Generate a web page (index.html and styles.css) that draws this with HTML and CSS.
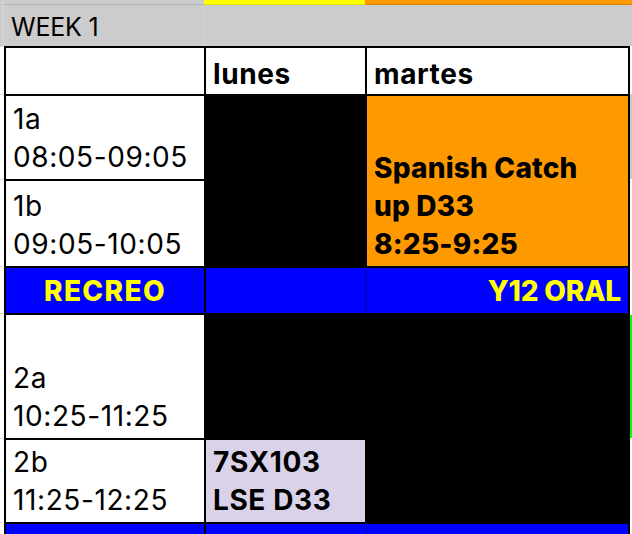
FILE: index.html
```html
<!DOCTYPE html>
<html lang="es">
<head>
<meta charset="utf-8">
<title>Week 1</title>
<link rel="stylesheet" href="styles.css">
</head>
<body>
<div class="sheet">
  <!-- strip row -->
  <div class="m m-gray"></div>
  <div class="strip gray"></div>
  <div class="strip yellow"></div>
  <div class="strip orange"></div>
  <div class="strip orange"></div>

  <!-- week row -->
  <div class="m m-gray"></div>
  <div class="cell week gray">WEEK 1</div>
  <div class="gray week-fill"></div>

  <!-- header row -->
  <div class="m m-line"></div>
  <div class="cell bt bl"></div>
  <div class="cell head bt bl">lunes</div>
  <div class="cell head bt bl br">martes</div>
  <div class="edge"></div>

  <!-- 1a -->
  <div class="m m-line"></div>
  <div class="cell bt bl">1a<br>08:05-09:05</div>
  <div class="cell black bt bl span2"></div>
  <div class="cell orange xb bt bl br span2">Spanish Catch<br>up D33<br>8:25-9:25</div>
  <div class="edge edge-gray"></div>

  <!-- 1b -->
  <div class="m m-line"></div>
  <div class="cell bt bl">1b<br>09:05-10:05</div>
  <div class="edge edge-cream"></div>

  <!-- recreo -->
  <div class="m m-line"></div>
  <div class="cell blue hl recreo center bt bl">RECREO</div>
  <div class="cell blue bt bl"></div>
  <div class="cell blue hl oral right bt bl-soft br">Y12 ORAL</div>
  <div class="edge"></div>

  <!-- 2a -->
  <div class="m m-line"></div>
  <div class="cell bt bl">2a<br>10:25-11:25</div>
  <div class="cell black bt bl"></div>
  <div class="cell black bt bl br span2"></div>
  <div class="edge edge-green"></div>

  <!-- 2b -->
  <div class="m m-line"></div>
  <div class="cell bt bl">2b<br>11:25-12:25</div>
  <div class="cell lavender b bt bl">7SX103<br>LSE D33</div>
  <div class="edge"></div>

  <!-- next row -->
  <div class="m m-line"></div>
  <div class="cell blue bt bl"></div>
  <div class="cell blue bt bl"></div>
  <div class="cell blue bt bl-soft br"></div>
  <div class="edge"></div>
</div>
</body>
</html>
```

FILE: styles.css
```css
* {
  box-sizing: border-box;
  margin: 0;
  padding: 0;
}

html,
body {
  width: 632px;
  height: 534px;
  overflow: hidden;
  background: #ffffff;
}

body {
  font-family: Inter, "Liberation Sans", sans-serif;
  color: #000000;
}

.sheet {
  display: grid;
  grid-template-columns: 4px 200px 161px 265px 2px;
  grid-template-rows: 5px 41px 48px 85px 87px 47px 125px 84px 12px;
}

.cell {
  display: flex;
  flex-direction: column;
  justify-content: flex-end;
  padding: 0 7px 3px 7px;
  font-size: 28px;
  line-height: 38px;
  letter-spacing: 0.6px;
  white-space: nowrap;
  overflow: hidden;
}

.bt { border-top: 2px solid #000000; }
.bl { border-left: 2px solid #000000; }
.br { border-right: 2px solid #000000; }
.bl-soft { border-left: 2px solid #0000c8; }

.span2 { grid-row: span 2; }

.b { font-weight: 700; }
.xb { font-weight: 800; letter-spacing: 0.2px; }
.center { align-items: center; }
.right { align-items: flex-end; }

.gray { background: #cccccc; }
.yellow { background: #ffff00; }
.orange { background: #ff9900; }
.black { background: #000000; }
.blue { background: #0000ff; }
.lavender { background: #d9d2e9; }
.hl { color: #ffff00; font-weight: 800; }

.recreo { letter-spacing: 1.4px; }
.oral { letter-spacing: -0.2px; }

.strip {
  border-bottom: 1px solid rgba(0, 0, 0, 0.12);
}

.m-gray {
  background: #cccccc;
  border-right: 1px solid #d8d8d8;
}

.m-line {
  border-top: 1px solid #e2e2e2;
}

.week {
  font-size: 25px;
  line-height: 34px;
  padding-bottom: 2px;
  letter-spacing: -0.2px;
  border-right: 1px solid #d6d6d6;
}

.week-fill {
  grid-column: span 3;
}

.head {
  font-weight: 700;
  padding-bottom: 1px;
}

.edge {
  background: #ffffff;
}

.edge-gray { background: #c8c8c8; }
.edge-cream { background: #fffbf0; }
.edge-green { background: #00ff00; border-top: 2px solid #ffffff; }
```
